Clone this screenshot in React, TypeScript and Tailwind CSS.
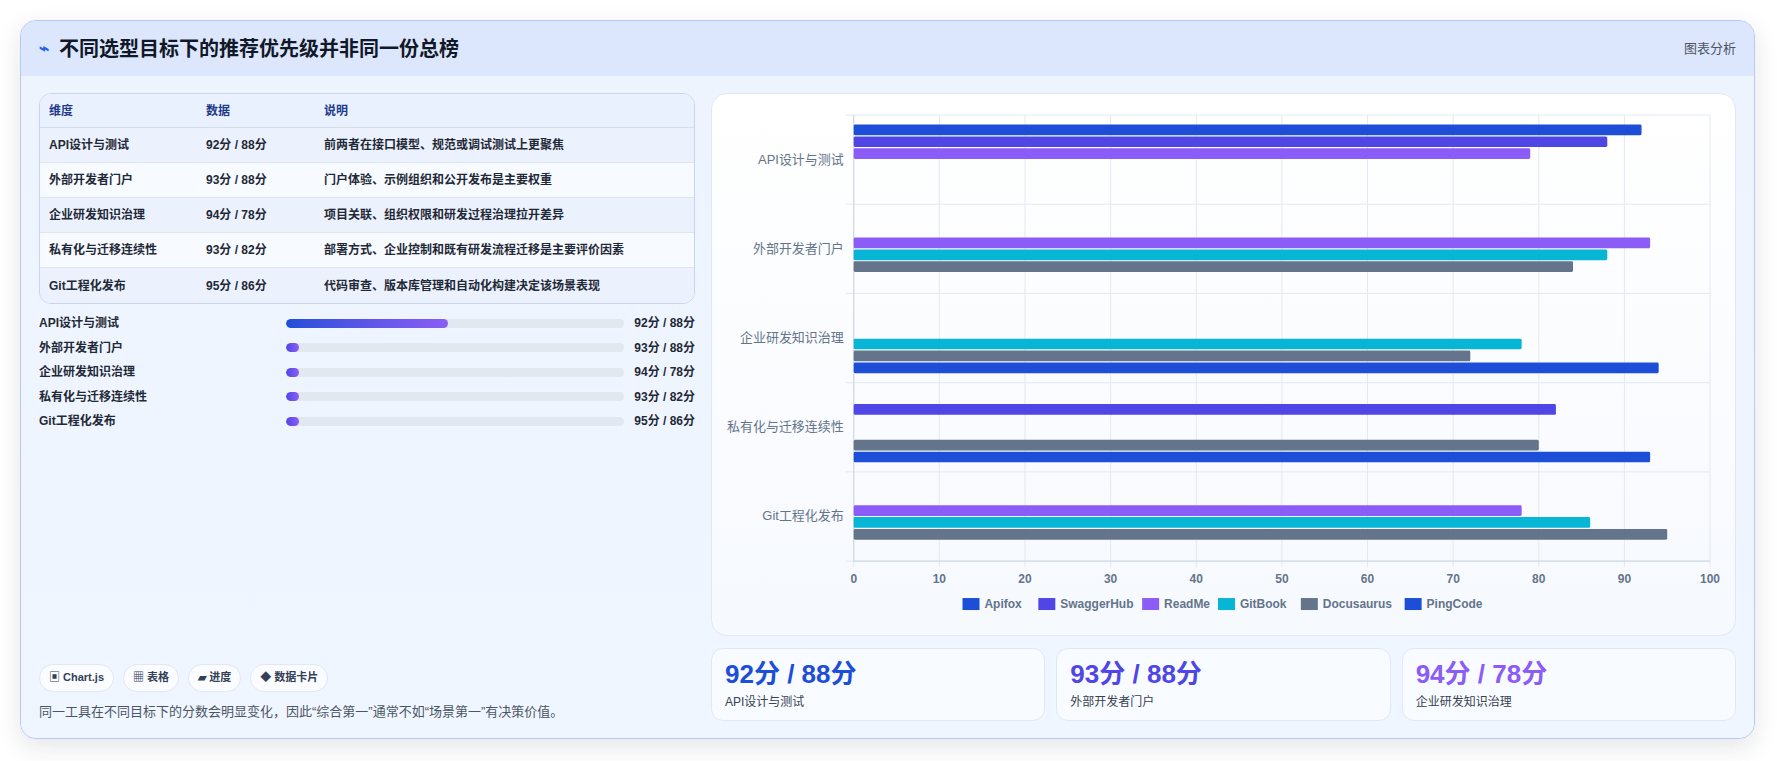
import React from "react";

const rows = [
  ["API设计与测试", "92分 / 88分", "前两者在接口模型、规范或调试测试上更聚焦"],
  ["外部开发者门户", "93分 / 88分", "门户体验、示例组织和公开发布是主要权重"],
  ["企业研发知识治理", "94分 / 78分", "项目关联、组织权限和研发过程治理拉开差异"],
  ["私有化与迁移连续性", "93分 / 82分", "部署方式、企业控制和既有研发流程迁移是主要评价因素"],
  ["Git工程化发布", "95分 / 86分", "代码审查、版本库管理和自动化构建决定该场景表现"],
];

const colors = ["#1d4ed8", "#4f46e5", "#8b5cf6", "#06b6d4", "#64748b", "#1d4ed8"];
const names = ["Apifox", "SwaggerHub", "ReadMe", "GitBook", "Docusaurus", "PingCode"];
const data: (number | null)[][] = [
  [92, 88, 79, null, null, null],
  [null, null, 93, 88, 84, null],
  [null, null, null, 78, 72, 94],
  [null, 82, null, null, 80, 93],
  [null, null, 78, 86, 95, null],
];

function Chart() {
  const x0 = 142, x1 = 1000, y0 = 21, y1 = 468;
  const ch = (y1 - y0) / 5;
  const slot = (ch * 0.8) / 6;
  const font = "'Liberation Sans', 'Noto Sans CJK SC', sans-serif";
  return (
    <svg viewBox="0 0 1025 542" className="w-full h-full block">
      {Array.from({ length: 11 }).map((_, i) => {
        const x = x0 + ((x1 - x0) * i) / 10;
        return (
          <g key={i}>
            <line x1={x} x2={x} y1={y0} y2={y1 + 6} stroke="#e3e9f1" />
            <text x={x} y={y1 + 22} fontSize="12" fontWeight="bold" fill="#64748b" textAnchor="middle" fontFamily={font}>{i * 10}</text>
          </g>
        );
      })}
      {Array.from({ length: 6 }).map((_, i) => (
        <line key={i} x1={x0 - 8} x2={x1} y1={y0 + ch * i} y2={y0 + ch * i} stroke="#e3e9f1" />
      ))}
      <line x1={x0} x2={x0} y1={y0} y2={y1} stroke="#cbd5e1" />
      <line x1={x0} x2={x1} y1={y1} y2={y1} stroke="#cbd5e1" />
      {rows.map((r, c) => {
        const top = y0 + ch * c + ch * 0.1;
        return (
          <g key={c}>
            <text x={x0 - 10} y={y0 + ch * c + ch / 2 + 4} fontSize="13" fill="#64748b" textAnchor="end" fontFamily={font}>{r[0]}</text>
            {data[c].map((v, s) =>
              v == null ? null : (
                <rect key={s} x={x0} y={top + slot * s + slot * 0.05} width={((x1 - x0) * v) / 100} height={slot * 0.9} fill={colors[s]} rx="1.5" />
              )
            )}
          </g>
        );
      })}
      {(() => {
        let x = 251;
        return names.map((n, i) => {
          const w = n.length * 7 + 26;
          const g = (
            <g key={n}>
              <rect x={x} y={505} width={17} height={12} fill={colors[i]} />
              <text x={x + 22} y={515} fontSize="12" fontWeight="bold" fill="#64748b" fontFamily={font}>{n}</text>
            </g>
          );
          x += w + 8;
          return g;
        });
      })()}
    </svg>
  );
}

export default function App() {
  return (
    <div className="bg-white w-[1777px] h-[761px] p-[20px] pr-[22px]" style={{ fontFamily: "'Liberation Sans', 'Noto Sans CJK SC', sans-serif" }}>
      <div className="h-[719px] rounded-2xl border border-[#b9c8f5] bg-[#eef4fe] shadow-[0_8px_24px_rgba(30,41,59,0.12)] overflow-hidden flex flex-col">
        <div className="h-[55px] bg-[#dce7fd] flex items-center justify-between px-[18px] shrink-0">
          <div className="flex items-center gap-[10px]">
            <span className="text-[#2563eb] text-[17px] font-bold">⌁</span>
            <span className="text-[20px] font-bold text-[#111827]">不同选型目标下的推荐优先级并非同一份总榜</span>
          </div>
          <span className="text-[13px] text-[#4b5563]">图表分析</span>
        </div>
        <div className="flex-1 flex gap-[16px] px-[18px] pt-[17px] pb-[17px] bg-gradient-to-b from-[#eef4fe] to-[#f0f6ff]">
          <div className="w-[656px] flex flex-col">
            <div className="rounded-xl border border-[#c9d6ea] overflow-hidden text-[12px] font-semibold">
              <div className="flex h-[34px] items-center bg-[#eaf1fe] border-b border-[#d5deea] text-[#1e3a8a] font-bold">
                <div className="w-[166px] pl-[9px]">维度</div>
                <div className="w-[118px]">数据</div>
                <div className="flex-1">说明</div>
              </div>
              {rows.map((r, i) => (
                <div key={i} className={`flex h-[35px] items-center text-[#1f2937] ${i < 4 ? "border-b border-[#dde5f0]" : ""} ${i % 2 === 0 ? "bg-[#ecf2fd]" : "bg-[#f7faff]"}`}>
                  <div className="w-[166px] pl-[9px]">{r[0]}</div>
                  <div className="w-[118px]">{r[1]}</div>
                  <div className="flex-1">{r[2]}</div>
                </div>
              ))}
            </div>
            <div className="flex flex-col gap-[8px] mt-[11px]">
              {rows.map((r, i) => (
                <div key={i} className="flex items-center h-[16.5px] text-[12px] font-semibold text-[#1f2937]">
                  <div className="w-[247px]">{r[0]}</div>
                  <div className="w-[338px] h-[9px] rounded-full bg-[#e2e8f0] overflow-hidden">
                    <div className={`h-full rounded-full bg-gradient-to-r from-[#1d4ed8] to-[#8b5cf6] ${i === 0 ? "w-[48%]" : "w-[13px] from-[#4f46e5] to-[#4f46e5]"}`} />
                  </div>
                  <div className="flex-1 text-right">{r[1]}</div>
                </div>
              ))}
            </div>
            <div className="flex-1" />
            <div className="flex gap-[9px] text-[11px] font-semibold text-[#334155]">
              {["▣ Chart.js", "▦ 表格", "▰ 进度", "◆ 数据卡片"].map((c) => (
                <span key={c} className="h-[28px] px-[9px] flex items-center rounded-full bg-white/70 border border-[#e2e8f0]">{c}</span>
              ))}
            </div>
            <div className="mt-[10px] text-[13px] text-[#4b5563]">同一工具在不同目标下的分数会明显变化，因此“综合第一”通常不如“场景第一”有决策价值。</div>
          </div>
          <div className="flex-1 flex flex-col gap-[12px]">
            <div className="h-[543px] rounded-2xl bg-gradient-to-b from-white to-[#f6f9fe] border border-[#e1e8f3]">
              <Chart />
            </div>
            <div className="flex-1 grid grid-cols-3 gap-[11px]">
              {[
                ["92分 / 88分", "API设计与测试", "text-[#1d4ed8]"],
                ["93分 / 88分", "外部开发者门户", "text-[#4f46e5]"],
                ["94分 / 78分", "企业研发知识治理", "text-[#8b5cf6]"],
              ].map(([v, l, c]) => (
                <div key={l} className="rounded-xl bg-[#f8fbff] border border-[#e1e8f3] px-[13px] pt-[9px]">
                  <div className={`text-[26px] font-bold leading-[32px] ${c}`}>{v}</div>
                  <div className="text-[12px] text-[#374151] mt-[3px]">{l}</div>
                </div>
              ))}
            </div>
          </div>
        </div>
      </div>
    </div>
  );
}
